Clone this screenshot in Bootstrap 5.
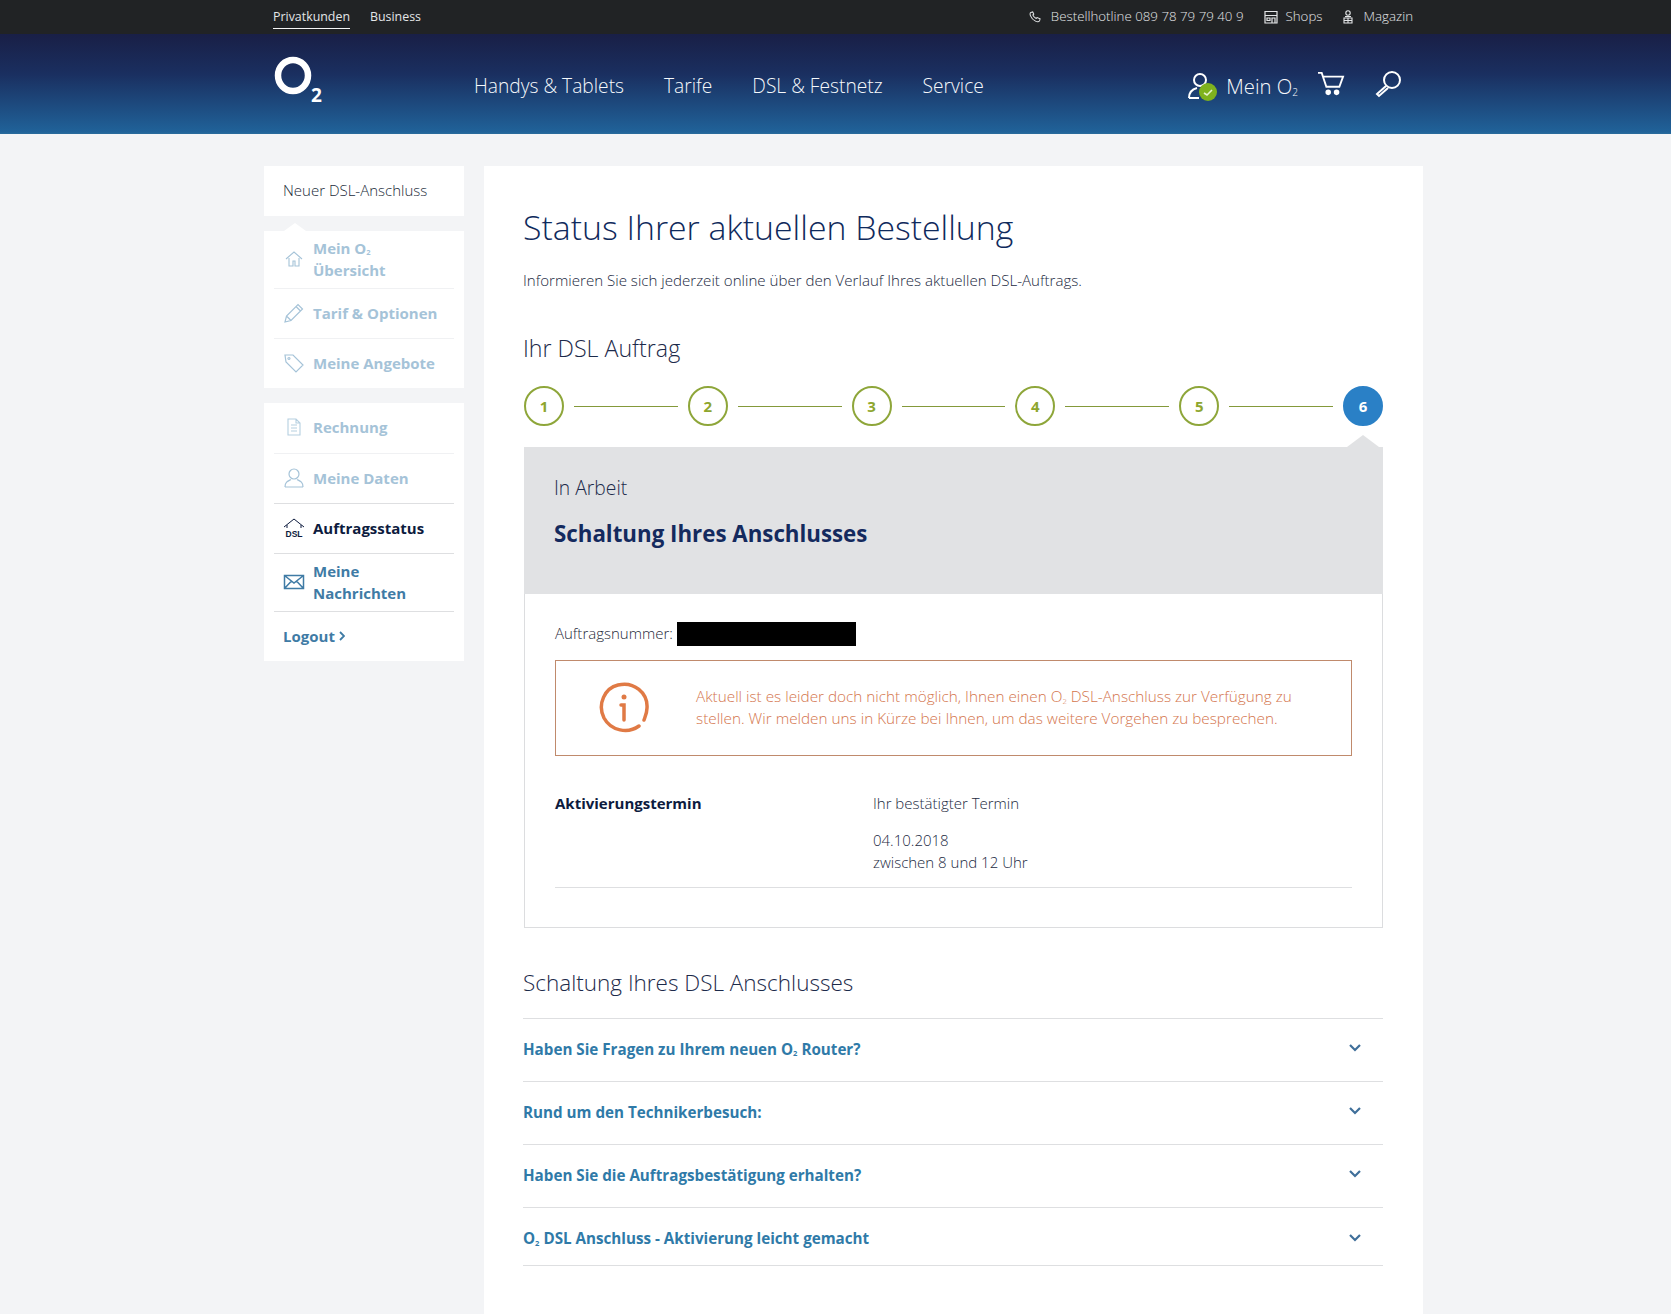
<!DOCTYPE html>
<html lang="de">
<head>
<meta charset="utf-8">
<title>Auftragsstatus</title>
<link href="https://cdn.jsdelivr.net/npm/bootstrap@5.3.0/dist/css/bootstrap.min.css" rel="stylesheet">
<style>
body{background:#f3f4f6;font-family:"Open Sans","Noto Sans",sans-serif;font-weight:300;font-size:15px;color:#0d1b3e;}
a{text-decoration:none;}
sub{font-size:.5em;bottom:-.2em;}
.shell{width:1159px;margin-left:264px;}
.topstrip{background:#212325;height:34px;color:#e4e6e8;font-size:12.4px;font-weight:400;}
.topin{padding:0 10px 0 9px;height:34px;}
.topstrip a{color:#e4e6e8;}
.topright{font-size:13.3px;font-weight:300;}
.seg-on{border-bottom:1px solid #f5f5f5;padding-bottom:1px;margin-top:3px;}
.masthead{height:100px;background:linear-gradient(180deg,#191f46 0%,#1a2f60 40%,#206299 98%,#2b6c9c 100%);color:#fff;}
.mastin{height:100px;padding:4px 21px 0 9px;}
.brandmark{width:52px;height:56px;margin-top:-8px;flex:none;}
.mainnav{margin-left:149px;gap:40px;font-size:19.2px;}
.mainnav a{color:#f6f9fc;}
.mein{font-size:20.3px;color:#f6f9fc;margin-left:7px;}
.sidecol{width:200px;flex:none;}
.sidebox{background:#fff;}
.sidehead{height:50px;padding:0 0 2px 19px;font-size:15px;font-weight:300;color:#222b3a;}
.sidegroup{margin-top:15px;padding:0 10px;}
.sidearrow{position:relative;}
.sidearrow::before{content:"";position:absolute;left:20px;top:-8px;border:solid transparent;border-width:0 11px 8px;border-bottom-color:#fff;}
.siderow{display:flex;align-items:center;border-bottom:1px solid #e8e9eb;height:50px;padding:0 0 2px 9px;font-size:15px;font-weight:700;line-height:22px;}
.siderow:first-child{height:51px;}
.siderow svg{width:22px;height:22px;flex:none;margin-right:8px;}
.siderow.tall{height:58px;}
.siderow.tall2{height:58px;}
.siderow:last-child{border-bottom:0;height:49px;}
.faded{color:#a5c3d8;border-color:#f0f1f3;}
.dark{color:#0d1b3e;}
.linky{color:#3f7ba5;}
.mainpanel{background:#fff;margin-left:20px;width:939px;padding:0 40px 0 39px;height:1148px;}
.pagetitle{font-size:33.8px;font-weight:300;color:#0f2a5c;margin:0;padding-top:38px;line-height:46px;}
.intro{margin:19px 0 0;line-height:22px;font-size:15.1px;color:#1c2a42;font-weight:300;}
.sect{font-size:22.5px;font-weight:300;color:#1c2a4a;margin:0;line-height:32px;}
.sect-first{margin-top:41px;font-size:23.2px;}
.steps{margin:22px 0 0 1px;height:40px;}
.stepdot{width:40px;height:40px;border-radius:50%;border:2px solid #8ea63a;color:#8ea62e;font-weight:700;font-size:15px;flex:none;}
.stepdot.now{background:#2a80c6;border-color:#2a80c6;color:#fff;}
.stepline{flex:1;height:1px;background:#84993a;margin:0 10px;}
.statushead{position:relative;background:#e1e2e4;height:147px;margin:21px 0 0 1px;padding:24px 30px;}
.statushead::before{content:"";position:absolute;right:4px;top:-12px;border:solid transparent;border-width:0 16px 12px;border-bottom-color:#e1e2e4;}
.statuslabel{font-size:19.3px;line-height:34px;color:#1c2a4a;}
.statustitle{font-size:22.3px;font-weight:700;color:#142a5e;line-height:32px;margin:0;padding-top:13px;}
.orderbox{border:1px solid #dcdddf;border-top:0;height:334px;padding:28px 30px 0;margin-left:1px;}
.ordernum{line-height:24px;height:24px;font-size:15px;font-weight:300;color:#1f2a3a;}
.numlabel{margin-top:-2px;}
.blackout{width:179px;height:24px;background:#000;margin-left:4px;}
.notice{border:1px solid #c08a6c;height:96px;margin-top:14px;padding-left:42px;color:#d4764e;font-size:15.3px;line-height:22px;font-weight:300;}
.notice svg{width:52px;height:52px;margin-right:46px;flex:none;}
.noticetext{margin-top:-2px;}
.termrow{padding-top:36px;border-bottom:1px solid #dedfe1;height:132px;line-height:22px;}
.termlabel{width:318px;font-weight:700;color:#0d1b3e;font-size:15px;}
.termval{font-size:15px;color:#1c2a42;}
.termval p{margin:0 0 15px;}
.sect2{margin-top:39px;}
.faq{margin-top:19px;border-top:1px solid #dedfe1;}
.faqrow{height:63px;border-bottom:1px solid #dedfe1;padding:0 21px 2px 0;color:#2f7aa8;font-weight:700;font-size:15.2px;}
.faqrow.last{height:58px;padding-top:6px;}
.faqrow svg{width:14px;height:10px;margin-top:-2px;}
</style>
</head>
<body>
<div class="topstrip">
  <div class="shell topin d-flex align-items-center justify-content-between">
    <div class="d-flex align-items-center gap-3">
      <a class="seg-on" href="#">Privatkunden</a>
      <a href="#" class="ms-1">Business</a>
    </div>
    <div class="d-flex align-items-center topright">
      <svg width="12" height="12" viewBox="0 0 13 13" fill="none" stroke="#e4e6e8" stroke-width="1.1"><path d="M2 1.500 4 1l1.200 2.300-1 1c.6 1.500 2 3 3.600 3.800l1-1L12 8.400 11.500 10.500C11 12 9 12 7 11 4.500 9.700 2.500 7.500 1.500 5 1 3.500 1 2.200 2 1.500z"/></svg>
      <a href="#" style="margin-left:10px">Bestellhotline 089 78 79 79 40 9</a>
      <svg style="margin-left:20px" width="14" height="14" viewBox="0 0 14 14" fill="none" stroke="#e4e6e8" stroke-width="1.2"><path d="M1 1.500h12v11.500H1zM1 5.500h12M8 13V8h3v5M3 8h3v2.500H3z"/></svg>
      <a href="#" style="margin-left:8px">Shops</a>
      <svg style="margin-left:19px" width="12" height="14" viewBox="0 0 12 14" fill="none" stroke="#e4e6e8" stroke-width="1.1"><circle cx="6" cy="3" r="2.200"/><path d="M3 6.500h6M2 8h8v5H2zM6 8v5M2 10.500h8"/></svg>
      <a href="#" style="margin-left:10px">Magazin</a>
    </div>
  </div>
</div>
<header class="masthead">
  <div class="shell mastin d-flex align-items-center">
    <svg class="brandmark" viewBox="0 0 52 56" role="img" aria-label="O2"><ellipse cx="20" cy="21.500" rx="15" ry="15.500" fill="none" stroke="#fff" stroke-width="6.500"/><text x="38" y="48" font-family="Open Sans, sans-serif" font-weight="700" font-size="19" fill="#fff">2</text></svg>
    <nav class="mainnav d-flex">
      <a href="#">Handys &amp; Tablets</a>
      <a href="#">Tarife</a>
      <a href="#">DSL &amp; Festnetz</a>
      <a href="#">Service</a>
    </nav>
    <div class="ms-auto d-flex align-items-center">
      <svg width="32" height="30" viewBox="0 0 32 30" fill="none"><circle cx="13" cy="9" r="6" stroke="#fff" stroke-width="2"/><path d="M2 27c0-6 4-9 8-10M2 27h10" stroke="#fff" stroke-width="2"/><circle cx="21" cy="21" r="9" fill="#7fb21e"/><path d="m17 22 3 2 5-5" stroke="#e6f3cc" stroke-width="1.600"/></svg>
      <span class="mein">Mein O<sub>2</sub></span>
      <svg style="margin-left:19px;margin-top:-4px" width="28" height="26" viewBox="0 0 30 28" fill="none" stroke="#fff" stroke-width="2"><path d="M1 2h4l5 15h14l4-11H6"/><circle cx="12" cy="23" r="2" fill="#fff"/><circle cx="21" cy="23" r="2" fill="#fff"/></svg>
      <svg style="margin-left:29px;margin-top:-4px" width="28" height="28" viewBox="0 0 28 28" fill="none" stroke="#fff" stroke-width="2"><circle cx="18" cy="10" r="8"/><path d="M12 16 3 24l2 2 9-8"/></svg>
    </div>
  </div>
</header>
<div class="shell d-flex" style="margin-top:32px">
  <aside class="sidecol">
    <div class="sidebox sidehead d-flex align-items-center">Neuer DSL-Anschluss</div>
    <div class="sidebox sidegroup sidearrow">
      <a href="#" class="siderow faded tall">
        <svg viewBox="0 0 22 22" fill="none" stroke="#a5c3d8" stroke-width="1.100"><path d="M3 11 11 4l8 7M6 10v8h4v-5h2v5h4v-8"/></svg>
        <span>Mein O<sub>2</sub><br>Übersicht</span>
      </a>
      <a href="#" class="siderow faded">
        <svg viewBox="0 0 22 22" fill="none" stroke="#a5c3d8" stroke-width="1.200"><path d="M2 20l1.500-6L15 2.500l4.500 4.500L8 18.500zM3.500 14 8 18.500M13 4.500 17.500 9"/></svg>
        <span>Tarif &amp; Optionen</span>
      </a>
      <a href="#" class="siderow faded">
        <svg viewBox="0 0 22 22" fill="none" stroke="#a5c3d8" stroke-width="1.200"><path d="M2 3h8l10 10-7 7L3 10zM6 5.500a1 1 0 1 1-.1 0"/></svg>
        <span>Meine Angebote</span>
      </a>
    </div>
    <div class="sidebox sidegroup">
      <a href="#" class="siderow faded">
        <svg viewBox="0 0 22 22" fill="none" stroke="#b5cfe0" stroke-width="1.100"><path d="M5 3h8l4 4v12H5zM13 3v4h4M8 9h6M8 12h6M8 15h6"/></svg>
        <span>Rechnung</span>
      </a>
      <a href="#" class="siderow faded" style="border-color:#dedfe1">
        <svg viewBox="0 0 22 22" fill="none" stroke="#a5c3d8" stroke-width="1.200"><circle cx="11" cy="7" r="5"/><path d="M2 20c0-5 3-6 6-7.500M20 20c0-5-3-6-6-7.500M2 20h18"/></svg>
        <span>Meine Daten</span>
      </a>
      <a href="#" class="siderow dark" style="border-color:#dedfe1">
        <svg viewBox="0 0 22 22" fill="none" stroke="#0d1b3e" stroke-width="1"><path d="M1 10 11 2l10 8M4 8v3M18 8v3"/><text x="2.500" y="20" font-size="8.500" font-family="Liberation Sans, sans-serif" fill="#0d1b3e" stroke="none">DSL</text></svg>
        <span>Auftragsstatus</span>
      </a>
      <a href="#" class="siderow linky tall2" style="border-color:#dedfe1">
        <svg viewBox="0 0 22 22" fill="none" stroke="#3f7ba5" stroke-width="1.500"><path d="M1.500 4.500h19v13h-19zM1.500 4.500 11 12l9.500-7.500M1.500 17.500l7-7.500M20.500 17.500l-7-7.500"/></svg>
        <span>Meine<br>Nachrichten</span>
      </a>
      <a href="#" class="siderow linky">Logout&nbsp;<svg style="width:6px;height:10px;margin:0" viewBox="0 0 6 10" fill="none" stroke="#3f7ba5" stroke-width="1.800"><path d="m1 1 4 4-4 4"/></svg></a>
    </div>
  </aside>
  <main class="mainpanel">
    <h1 class="pagetitle">Status Ihrer aktuellen Bestellung</h1>
    <p class="intro">Informieren Sie sich jederzeit online über den Verlauf Ihres aktuellen DSL-Auftrags.</p>
    <h2 class="sect sect-first">Ihr DSL Auftrag</h2>
    <div class="steps d-flex align-items-center">
      <div class="stepdot d-flex align-items-center justify-content-center">1</div><div class="stepline"></div>
      <div class="stepdot d-flex align-items-center justify-content-center">2</div><div class="stepline"></div>
      <div class="stepdot d-flex align-items-center justify-content-center">3</div><div class="stepline"></div>
      <div class="stepdot d-flex align-items-center justify-content-center">4</div><div class="stepline"></div>
      <div class="stepdot d-flex align-items-center justify-content-center">5</div><div class="stepline"></div>
      <div class="stepdot now d-flex align-items-center justify-content-center">6</div>
    </div>
    <div class="statushead">
      <div class="statuslabel">In Arbeit</div>
      <h3 class="statustitle">Schaltung Ihres Anschlusses</h3>
    </div>
    <div class="orderbox">
      <div class="ordernum d-flex align-items-center"><span class="numlabel">Auftragsnummer:</span><span class="blackout"></span></div>
      <div class="notice d-flex align-items-center">
        <svg viewBox="0 0 52 52" fill="none" stroke="#e07a45" stroke-width="3.500" stroke-linecap="round"><path d="M41 44C30 52 13 49 6 36-1 22 7 6 20 3 36-1 50 11 49 26c0 5-2 9-3 12"/><circle cx="26" cy="15" r="2.500" fill="#e07a45" stroke="none"/><path d="M23 23h3v15"/></svg>
        <div class="noticetext">Aktuell ist es leider doch nicht möglich, Ihnen einen O<sub>2</sub> DSL-Anschluss zur Verfügung zu<br>stellen. Wir melden uns in Kürze bei Ihnen, um das weitere Vorgehen zu besprechen.</div>
      </div>
      <div class="termrow d-flex">
        <div class="termlabel">Aktivierungstermin</div>
        <div class="termval">
          <p>Ihr bestätigter Termin</p>
          04.10.2018<br>zwischen 8 und 12 Uhr
        </div>
      </div>
    </div>
    <h2 class="sect sect2">Schaltung Ihres DSL Anschlusses</h2>
    <div class="faq">
      <a href="#" class="faqrow d-flex align-items-center justify-content-between"><span>Haben Sie Fragen zu Ihrem neuen O<sub>2</sub> Router?</span><svg viewBox="0 0 14 10" fill="none" stroke="#3f6f9a" stroke-width="2.200"><path d="m2 2 5 5 5-5"/></svg></a>
      <a href="#" class="faqrow d-flex align-items-center justify-content-between"><span>Rund um den Technikerbesuch:</span><svg viewBox="0 0 14 10" fill="none" stroke="#3f6f9a" stroke-width="2.200"><path d="m2 2 5 5 5-5"/></svg></a>
      <a href="#" class="faqrow d-flex align-items-center justify-content-between"><span>Haben Sie die Auftragsbestätigung erhalten?</span><svg viewBox="0 0 14 10" fill="none" stroke="#3f6f9a" stroke-width="2.200"><path d="m2 2 5 5 5-5"/></svg></a>
      <a href="#" class="faqrow last d-flex align-items-center justify-content-between"><span>O<sub>2</sub> DSL Anschluss - Aktivierung leicht gemacht</span><svg viewBox="0 0 14 10" fill="none" stroke="#3f6f9a" stroke-width="2.200"><path d="m2 2 5 5 5-5"/></svg></a>
    </div>
  </main>
</div>
<script src="https://cdn.jsdelivr.net/npm/bootstrap@5.3.0/dist/js/bootstrap.bundle.min.js"></script>
</body>
</html>
